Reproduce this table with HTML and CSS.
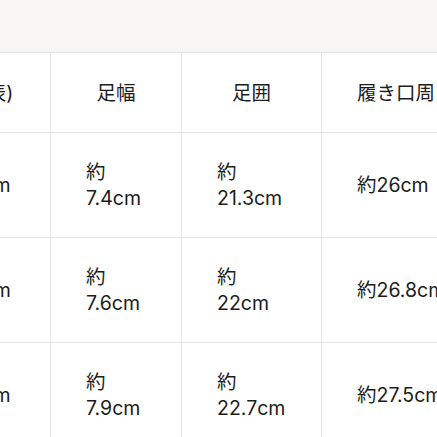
FILE: index.html
```html
<!DOCTYPE html>
<html lang="ja">
<head>
<meta charset="utf-8">
<link rel="stylesheet" href="styles.css">
</head>
<body>
<div class="top"></div>
<div class="wrap">
<table class="size">
  <colgroup>
    <col class="c0"><col class="c1"><col class="c2"><col class="c3">
  </colgroup>
  <thead>
    <tr>
      <th class="hc">足長(表)</th>
      <th class="hc">足幅</th>
      <th class="hc">足囲</th>
      <th class="hl">履き口周り</th>
    </tr>
  </thead>
  <tbody>
    <tr><td>約23cm</td><td>約<br>7.4cm</td><td>約<br>21.3cm</td><td>約26cm</td></tr>
    <tr><td>約24cm</td><td>約<br>7.6cm</td><td>約<br>22cm</td><td>約26.8cm</td></tr>
    <tr><td>約25cm</td><td>約<br>7.9cm</td><td>約<br>22.7cm</td><td>約27.5cm</td></tr>
  </tbody>
</table>
</div>
</body>
</html>
```
FILE: styles.css
```css
html, body {
  margin: 0;
  padding: 0;
  background: #ffffff;
  overflow: hidden;
}
.top {
  height: 52px;
  background: #f7f6f4;
}
.wrap {
  overflow: hidden;
  width: 437px;
}
.size {
  border-collapse: collapse;
  table-layout: fixed;
  width: 640px;
  margin-left: -97px;
  font-family: "Inter", "Noto Sans CJK JP", sans-serif;
  font-size: 19.5px;
  line-height: 26px;
  color: #1c1c1c;
}
.c0 { width: 147px; }
.c1 { width: 131px; }
.c2 { width: 140px; }
.c3 { width: 222px; }
.size th, .size td {
  border: 1.5px solid #e6e6e6;
  padding: 0 35px;
  font-weight: normal;
  vertical-align: middle;
}
.size th {
  height: 79px;
}
.size td {
  height: 104px;
  text-align: left;
}
.size th.hc { text-align: center; }
.size th.hl { text-align: left; }
```
